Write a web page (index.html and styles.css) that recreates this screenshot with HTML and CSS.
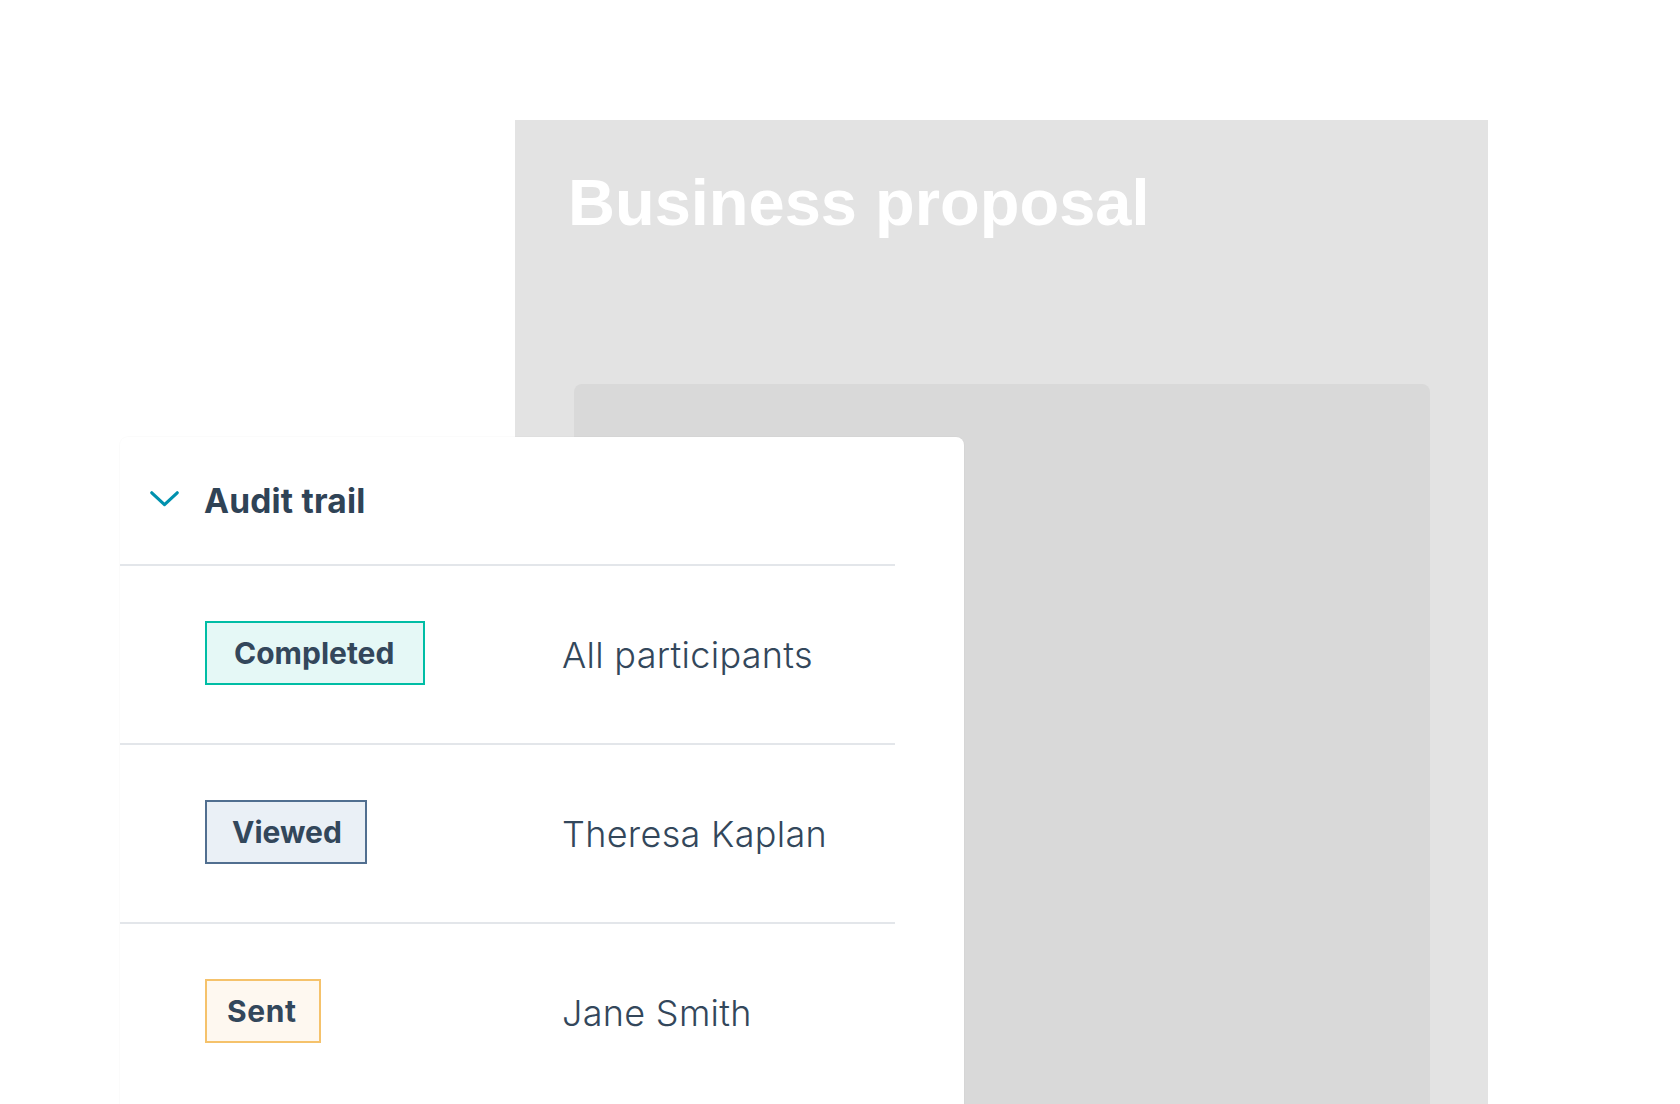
FILE: index.html
```html
<!DOCTYPE html>
<html lang="en">
<head>
<meta charset="utf-8">
<title>Audit trail</title>
<link rel="stylesheet" href="styles.css">
</head>
<body>
<div class="stage">
  <section class="doc">
    <h1 class="doc-title">Business proposal</h1>
    <div class="doc-body"></div>
  </section>

  <section class="audit">
    <header class="audit-head">
      <svg class="chevron" width="29" height="16" viewBox="0 0 29 16" aria-hidden="true">
        <path d="M1.8 1.8 L14.5 13.6 L27.2 1.8" fill="none" stroke="#0091ae" stroke-width="3.2" stroke-linecap="round" stroke-linejoin="round"/>
      </svg>
      <h2 class="audit-title">Audit trail</h2>
    </header>
    <ul class="audit-list">
      <li class="audit-row">
        <span class="badge badge-completed">Completed</span>
        <span class="who">All participants</span>
      </li>
      <li class="audit-row">
        <span class="badge badge-viewed">Viewed</span>
        <span class="who">Theresa Kaplan</span>
      </li>
      <li class="audit-row">
        <span class="badge badge-sent">Sent</span>
        <span class="who">Jane Smith</span>
      </li>
    </ul>
  </section>
</div>
</body>
</html>
```

FILE: styles.css
```css
html, body {
  margin: 0;
  padding: 0;
  background: #ffffff;
  overflow: hidden;
}

.stage {
  position: relative;
  width: 1680px;
  height: 1104px;
  overflow: hidden;
}

.doc {
  margin: 120px 0 0 515px;
  width: 973px;
  height: 984px;
  background: #e3e3e3;
  padding: 50px 0 0 0;
  box-sizing: border-box;
  display: flex;
  flex-direction: column;
}

.doc-title {
  margin: 0 0 0 53px;
  font-family: "Liberation Sans", Arial, sans-serif;
  font-weight: 700;
  font-size: 65px;
  line-height: 1;
  color: #ffffff;
  letter-spacing: 0;
}

.doc-body {
  margin: 149px 58px 0 59px;
  flex: 1;
  background: #d9d9d9;
  border-radius: 8px 8px 0 0;
}

.audit {
  position: absolute;
  left: 120px;
  top: 437px;
  width: 844px;
  height: 700px;
  background: #ffffff;
  border-radius: 8px 8px 0 0;
  box-shadow: 0 0 0 1px rgba(0, 0, 0, 0.015);
  font-family: Inter, "Liberation Sans", sans-serif;
  color: #33475b;
}

.audit-head {
  height: 127px;
  display: flex;
  align-items: center;
  padding-left: 30px;
  gap: 25px;
  border-bottom: 2px solid #e3e6ea;
  margin-right: 69px;
}

.chevron {
  display: block;
  flex: none;
  margin-top: -4px;
}

.audit-title {
  margin: 0;
  font-size: 33.5px;
  font-weight: 700;
  color: #2f4356;
  letter-spacing: 0.2px;
}

.audit-list {
  list-style: none;
  margin: 0 69px 0 0;
  padding: 0;
}

.audit-row {
  height: 177px;
  display: grid;
  grid-template-columns: 357px 1fr;
  align-items: center;
  padding-left: 85px;
  border-bottom: 2px solid #e3e6ea;
}

.audit-row:last-child {
  border-bottom: none;
}

.badge {
  justify-self: start;
  height: 64px;
  margin-top: -3px;
  box-sizing: border-box;
  display: inline-flex;
  align-items: center;
  padding: 0 23px 0 25px;
  border: 2px solid;
  font-size: 30px;
  font-weight: 700;
  color: #33475b;
}

.badge-completed {
  border-color: #00bda5;
  background: #e5f8f6;
  padding: 0 29px 0 27px;
}

.badge-viewed {
  border-color: #516f90;
  background: #eaf0f6;
}

.badge-sent {
  border-color: #f5c26b;
  background: #fef8f0;
  padding: 0 22px 0 20px;
  letter-spacing: 0.6px;
}

.who {
  font-size: 36px;
  font-weight: 300;
  color: #33475b;
  letter-spacing: 0.3px;
}
```
